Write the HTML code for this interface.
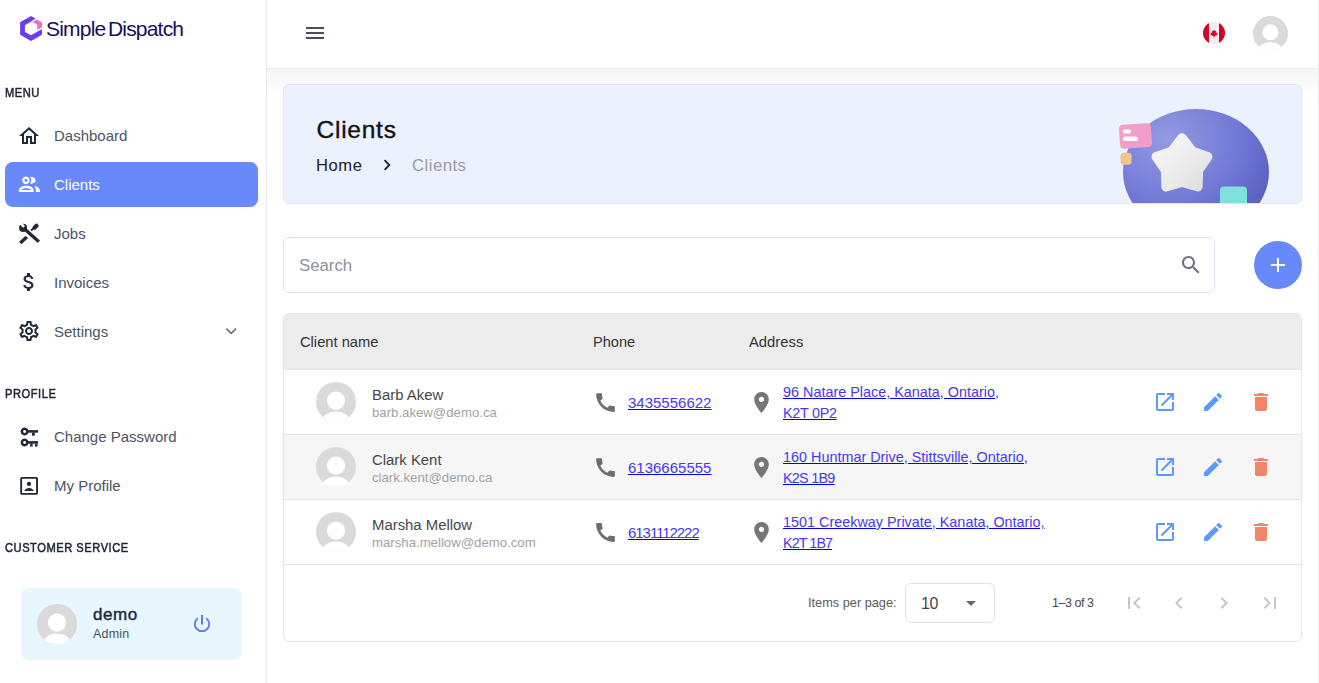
<!DOCTYPE html>
<html><head><meta charset="utf-8">
<style>
*{box-sizing:border-box;margin:0;padding:0}
html,body{width:1319px;height:683px;overflow:hidden;background:#fff;font-family:"Liberation Sans",sans-serif}
.t{position:absolute;white-space:nowrap}
.i{position:absolute;display:block;overflow:visible}
.b{position:absolute}
a,.u{text-decoration:underline;text-decoration-color:#0000ee;text-underline-offset:2px}
</style></head><body>

<div class="b" style="left:266px;top:0;width:1px;height:683px;background:#e8ebf0"></div>
<svg class="i" style="left:0;top:0;width:60px;height:60px" viewBox="0 0 60 60"><path fill="#6a3cf2" d="M35.5 18.5 L31 16 L20.1 22.2 L20.1 34.8 L31 40.9 L42 34.8 L42 29 L37.2 31.7 L31 35.3 L24.9 31.9 L24.9 25.3 L30.8 21.8 Z"/><path fill="#f06cc2" d="M32.4 22.2 L36.8 19.6 L42 22.5 L42 27.3 L37.2 29.9 L37.2 24.6 Z"/></svg>
<div class="t" style="left:46px;top:17px;font-size:21px;line-height:23px;color:#16105a;letter-spacing:-0.8px;word-spacing:-2.5px">Simple Dispatch</div>
<div class="t" style="left:5px;top:86px;font-size:12.5px;line-height:14px;color:#1f2636;letter-spacing:0.6px;-webkit-text-stroke:0.55px #1f2636;transform:scaleX(0.89);transform-origin:0 0">MENU</div>
<div class="t" style="left:5px;top:387px;font-size:12.5px;line-height:14px;color:#1f2636;letter-spacing:0.6px;-webkit-text-stroke:0.55px #1f2636;transform:scaleX(0.89);transform-origin:0 0">PROFILE</div>
<div class="t" style="left:5px;top:541px;font-size:12.5px;line-height:14px;color:#1f2636;letter-spacing:0.6px;-webkit-text-stroke:0.55px #1f2636;transform:scaleX(0.89);transform-origin:0 0">CUSTOMER SERVICE</div>
<div class="b" style="left:5px;top:162px;width:253px;height:45px;border-radius:8px;background:#6789fa"></div>
<svg class="i" style="left:17px;top:124px;width:24px;height:24px;fill:#222a3a" viewBox="0 0 24 24"><path d="M12 5.69l5 4.5V18h-2v-6H9v6H7v-7.81l5-4.5M12 3L2 12h3v8h6v-6h2v6h6v-8h3L12 3z"/></svg>
<div class="t" style="left:54px;top:127px;font-size:15px;line-height:17px;color:#4b5364">Dashboard</div>
<svg class="i" style="left:17px;top:172px;width:24px;height:24px" viewBox="0 0 24 24" fill="#fff"><path fill-rule="evenodd" d="M9 4.55 A3.75 3.75 0 1 1 8.99 4.55 Z M9 6.8 A1.5 1.5 0 1 0 9.01 6.8 Z"/><path d="M13.1 4.7 C16.8 4.7 18.6 6.4 18.6 8.35 C18.6 10.3 16.8 12 13.1 12 C13.9 10.9 14.2 9.7 14.2 8.35 C14.2 7 13.9 5.8 13.1 4.7 Z"/><path fill-rule="evenodd" d="M1.9 20 V18.6 C1.9 15.6 5.5 13.8 9.3 13.8 C13.1 13.8 16.7 15.6 16.7 18.6 V20 Z M4.2 18 C5 16.8 7 16.2 9.3 16.2 C11.6 16.2 13.6 16.8 14.4 18 Z"/><path d="M17.3 14.0 C20.6 14.5 22.9 16.1 22.9 18.6 V20 H18.9 V18.6 C18.9 16.8 18.3 15.2 17.3 14.0 Z"/></svg>
<div class="t" style="left:54px;top:176px;font-size:15px;line-height:17px;color:#fff">Clients</div>
<svg class="i" style="left:17px;top:221px;width:24px;height:24px" viewBox="0 0 24 24" fill="#222a3a"><defs><mask id="wm"><rect width="24" height="24" fill="#fff"/><path d="M4.3 1.2 L8.0 4.9 L6.1 6.8 L2.4 3.1 Z" fill="#000"/></mask></defs><g mask="url(#wm)"><circle cx="6.1" cy="6.9" r="4.05"/></g><path d="M8.2 8.4 L21.9 20.7" stroke="#222a3a" stroke-width="3.3"/><path d="M9.9 15.9 L3.2 21.9" stroke="#222a3a" stroke-width="3.4"/><path d="M14.0 9.5 L16.8 7.2" stroke="#222a3a" stroke-width="2.1"/><path d="M17.7 6.6 L19.5 4.8" stroke="#222a3a" stroke-width="4.3" stroke-linecap="round"/></svg>
<div class="t" style="left:54px;top:225px;font-size:15px;line-height:17px;color:#4b5364">Jobs</div>
<svg class="i" style="left:17px;top:270px;width:24px;height:24px;fill:#222a3a" viewBox="0 0 24 24"><path d="M11.8 10.9c-2.27-.59-3-1.2-3-2.15 0-1.09 1.01-1.85 2.7-1.85 1.78 0 2.44.85 2.5 2.1h2.21c-.07-1.72-1.12-3.3-3.21-3.81V3h-3v2.16c-1.94.42-3.5 1.68-3.5 3.61 0 2.31 1.91 3.46 4.7 4.13 2.5.6 3 1.48 3 2.41 0 .69-.49 1.79-2.7 1.79-2.06 0-2.87-.92-2.98-2.1h-2.2c.12 2.19 1.76 3.42 3.68 3.83V21h3v-2.15c1.95-.37 3.5-1.5 3.5-3.55 0-2.84-2.43-3.81-4.7-4.4z"/></svg>
<div class="t" style="left:54px;top:274px;font-size:15px;line-height:17px;color:#4b5364">Invoices</div>
<svg class="i" style="left:17px;top:319px;width:24px;height:24px;fill:#222a3a" viewBox="0 0 24 24"><path d="M19.43 12.98c.04-.32.07-.64.07-.98 0-.34-.03-.66-.07-.98l2.11-1.65c.19-.15.24-.42.12-.64l-2-3.46c-.09-.16-.26-.25-.44-.25-.06 0-.12.01-.17.03l-2.49 1c-.52-.4-1.08-.73-1.69-.98l-.38-2.65C14.46 2.18 14.25 2 14 2h-4c-.25 0-.46.18-.49.42l-.38 2.65c-.61.25-1.17.59-1.69.98l-2.49-1c-.06-.02-.12-.03-.18-.03-.17 0-.34.09-.43.25l-2 3.46c-.13.22-.07.49.12.64l2.11 1.65c-.04.32-.07.65-.07.98 0 .33.03.66.07.98l-2.11 1.65c-.19.15-.24.42-.12.64l2 3.46c.09.16.26.25.44.25.06 0 .12-.01.17-.03l2.49-1c.52.4 1.08.73 1.69.98l.38 2.65c.03.24.24.42.49.42h4c.25 0 .46-.18.49-.42l.38-2.65c.61-.25 1.17-.59 1.69-.98l2.49 1c.06.02.12.03.18.03.17 0 .34-.09.43-.25l2-3.46c.12-.22.07-.49-.12-.64l-2.11-1.65zm-1.98-1.71c.04.31.05.52.05.73 0 .21-.02.43-.05.73l-.14 1.13.89.7 1.08.84-.7 1.21-1.27-.51-1.04-.42-.9.68c-.43.32-.84.56-1.25.73l-1.06.43-.16 1.13-.2 1.35h-1.4l-.19-1.35-.16-1.13-1.06-.43c-.43-.18-.83-.41-1.23-.71l-.91-.7-1.06.43-1.27.51-.7-1.21 1.08-.84.89-.7-.14-1.13c-.03-.31-.05-.54-.05-.74s.02-.43.05-.73l.14-1.13-.89-.7-1.08-.84.7-1.21 1.27.51 1.04.42.9-.68c.43-.32.84-.56 1.25-.73l1.06-.43.16-1.13.2-1.35h1.39l.19 1.35.16 1.13 1.06.43c.43.18.83.41 1.23.71l.91.7 1.06-.43 1.27-.51.7 1.21-1.07.85-.89.7.14 1.13zM12 8c-2.21 0-4 1.79-4 4s1.79 4 4 4 4-1.79 4-4-1.79-4-4-4zm0 6c-1.1 0-2-.9-2-2s.9-2 2-2 2 .9 2 2-.9 2-2 2z"/></svg>
<div class="t" style="left:54px;top:323px;font-size:15px;line-height:17px;color:#4b5364">Settings</div>
<svg class="i" style="left:17px;top:424px;width:24px;height:24px" viewBox="0 0 24 24" fill="#222a3a"><path fill-rule="evenodd" d="M7.6 3.4 A4 4 0 1 1 7.59 3.4 Z M7.6 5.9 A1.5 1.5 0 1 0 7.61 5.9 Z"/><rect x="10.8" y="6.1" width="10.3" height="2.6"/><rect x="15" y="8.5" width="2.8" height="3.2"/><path fill-rule="evenodd" d="M7.6 14.4 A4 4 0 1 1 7.59 14.4 Z M7.6 16.9 A1.5 1.5 0 1 0 7.61 16.9 Z"/><rect x="10.8" y="17.1" width="10.3" height="2.6"/><rect x="13.1" y="19.5" width="2.5" height="3.1"/><rect x="18.1" y="19.5" width="2.4" height="3.1"/></svg>
<div class="t" style="left:54px;top:428px;font-size:15px;line-height:17px;color:#4b5364">Change Password</div>
<svg class="i" style="left:17px;top:473px;width:24px;height:24px" viewBox="0 0 24 24" fill="#222a3a"><path fill-rule="evenodd" d="M4.8 3.9h14.6a1.6 1.6 0 0 1 1.6 1.6v14.7a1.6 1.6 0 0 1 -1.6 1.6H4.8a1.6 1.6 0 0 1 -1.6 -1.6V5.5A1.6 1.6 0 0 1 4.8 3.9Z M5.1 5.8V19.9H19.1V5.8Z"/><circle cx="12" cy="10.9" r="2.15"/><path d="M7.2 17.9 C7.9 15.9 10 14.9 12 14.9 C14 14.9 16.1 15.9 16.8 17.9 Z"/></svg>
<div class="t" style="left:54px;top:477px;font-size:15px;line-height:17px;color:#4b5364">My Profile</div>
<svg class="i" style="left:224px;top:325px;width:14px;height:12px" viewBox="0 0 14 12"><path d="M2.3 3.6 L7.2 8.4 L12.1 3.6" fill="none" stroke="#667085" stroke-width="1.6"/></svg>
<div class="b" style="left:21px;top:588px;width:221px;height:72px;border-radius:8px;background:#e8f6fe"></div>
<svg class="i" style="left:37px;top:604px;width:40px;height:40px" viewBox="0 0 100 100"><defs><clipPath id="c37_604"><circle cx="50" cy="50" r="50"/></clipPath></defs><circle cx="50" cy="50" r="50" fill="#dadada"/><g clip-path="url(#c37_604)"><circle cx="50" cy="46.5" r="22.8" fill="#fff"/><ellipse cx="50" cy="100" rx="36" ry="26" fill="#fff"/></g></svg>
<div class="t" style="left:93px;top:605px;font-size:17px;line-height:19px;color:#232a3a;letter-spacing:0.55px;-webkit-text-stroke:0.45px #232a3a">demo</div>
<div class="t" style="left:93px;top:627px;font-size:12.5px;line-height:14px;color:#4a5262;letter-spacing:0.2px">Admin</div>
<svg class="i" style="left:0;top:0;width:1319px;height:683px" viewBox="0 0 1319 683"><path d="M197.77 618.17 A7.2 7.2 0 1 0 206.23 618.17" fill="none" stroke="#6079f3" stroke-width="1.8"/><path d="M202 615 V624.6" stroke="#6079f3" stroke-width="2"/></svg>
<div class="b" style="left:267px;top:68px;width:1052px;height:1px;background:#eaebee"></div>
<div class="b" style="left:267px;top:69px;width:1052px;height:30px;background:linear-gradient(#f5f6f7,#f9f9fa 40%,rgba(255,255,255,0))"></div>
<svg class="i" style="left:303px;top:21px;width:24px;height:24px;fill:#454d5e" viewBox="0 0 24 24"><path d="M3 18h18v-2H3v2zm0-5h18v-2H3v2zm0-7v2h18V6H3z"/></svg>
<svg class="i" style="left:1203px;top:22px;width:22px;height:22px" viewBox="0 0 22 22"><defs><clipPath id="fl"><circle cx="11" cy="11" r="11"/></clipPath></defs><g clip-path="url(#fl)"><rect width="22" height="22" fill="#eeeeee"/><rect width="6" height="22" fill="#d80027"/><rect x="16" width="6" height="22" fill="#d80027"/><path d="M11 7.5 L12 9.3 L13.2 8.8 L12.8 11 L14.5 10.6 L14 12 L15 12.5 L11.4 14.2 L11.4 15.6 L10.6 15.6 L10.6 14.2 L7 12.5 L8 12 L7.5 10.6 L9.2 11 L8.8 8.8 L10 9.3 Z" fill="#d80027"/></g></svg>
<svg class="i" style="left:1253px;top:16px;width:35px;height:35px" viewBox="0 0 100 100"><defs><clipPath id="c1253_16"><circle cx="50" cy="50" r="50"/></clipPath></defs><circle cx="50" cy="50" r="50" fill="#dadada"/><g clip-path="url(#c1253_16)"><circle cx="50" cy="46.5" r="22.8" fill="#fff"/><ellipse cx="50" cy="100" rx="36" ry="26" fill="#fff"/></g></svg>
<div class="b" style="left:1318px;top:0;width:1px;height:683px;background:#e8e9eb"></div>
<div class="b" style="left:283px;top:84px;width:1019px;height:120px;border:1px solid #e2e8f5;border-radius:6px;background:#ebf1fd;overflow:hidden">
<svg class="i" style="left:-1px;top:-1px;width:1019px;height:120px" viewBox="283 84 1019 120"><defs><radialGradient id="bg1" cx="0.3" cy="0.25" r="0.9"><stop offset="0" stop-color="#949be3"/><stop offset="0.55" stop-color="#7178d6"/><stop offset="1" stop-color="#5357b8"/></radialGradient><linearGradient id="st" x1="0" y1="0" x2="1" y2="1"><stop offset="0" stop-color="#f6f6f6"/><stop offset="0.6" stop-color="#ebebeb"/><stop offset="1" stop-color="#dcdcdf"/></linearGradient></defs><ellipse cx="1196" cy="172" rx="73" ry="63" fill="url(#bg1)"/><rect x="1119.5" y="124" width="32" height="24" rx="4" fill="#f0a0c8" transform="rotate(-4 1135 136)"/><rect x="1123" y="129.5" width="8" height="4" rx="2" fill="#fff"/><rect x="1123" y="136.5" width="15" height="4.6" rx="2.2" fill="#fff"/><rect x="1120.5" y="152.8" width="11" height="12" rx="3" fill="#f2c48c"/><path d="M1182.0 138.0 L1192.1 151.1 L1207.7 156.7 L1198.4 170.3 L1197.9 186.8 L1182.0 182.2 L1166.1 186.8 L1165.6 170.3 L1156.3 156.7 L1171.9 151.1 Z" fill="url(#st)" stroke="url(#st)" stroke-width="9.5" stroke-linejoin="round"/><rect x="1220" y="186.6" width="27" height="30" rx="4" fill="#7fe0dc"/></svg>
</div>
<div class="t" style="left:316.5px;top:116px;font-size:24.5px;line-height:27px;color:#141414;letter-spacing:0.75px;-webkit-text-stroke:0.4px #141414">Clients</div>
<div class="t" style="left:316px;top:156px;font-size:16.6px;line-height:19px;color:#222;letter-spacing:0.55px">Home</div>
<svg class="i" style="left:377px;top:153px;width:20px;height:24px" viewBox="0 0 20 24"><path d="M7.6 7.2 L12.3 12 L7.6 16.8" fill="none" stroke="#222" stroke-width="1.9"/></svg>
<div class="t" style="left:412px;top:156px;font-size:16.8px;line-height:19px;color:#9a9ca3;letter-spacing:0.45px">Clients</div>
<div class="b" style="left:283px;top:237px;width:932px;height:56px;border:1px solid #dfe3ef;border-radius:6px;background:#fff"></div>
<div class="t" style="left:299px;top:256px;font-size:16.8px;line-height:19px;color:#8d929b">Search</div>
<svg class="i" style="left:1179px;top:253px;width:24px;height:24px;fill:#6c717b" viewBox="0 0 24 24"><path d="M15.5 14h-.79l-.28-.27C15.41 12.59 16 11.11 16 9.5 16 5.91 13.09 3 9.5 3S3 5.91 3 9.5 5.91 16 9.5 16c1.61 0 3.09-.59 4.23-1.57l.27.28v.79l5 4.99L20.49 19l-4.99-5zm-6 0C7.01 14 5 11.99 5 9.5S7.01 5 9.5 5 14 7.01 14 9.5 11.99 14 9.5 14z"/></svg>
<div class="b" style="left:1254px;top:241px;width:48px;height:48px;border-radius:50%;background:#6789fa"></div>
<svg class="i" style="left:1266px;top:253px;width:24px;height:24px;fill:#fff" viewBox="0 0 24 24"><path d="M19 13h-6v6h-2v-6H5v-2h6V5h2v6h6v2z"/></svg>
<div class="b" style="left:283px;top:313px;width:1019px;height:329px;border:1px solid #e1e6ed;border-radius:6px;background:#fff;overflow:hidden">
<div class="b" style="left:0;top:0;width:1017px;height:55px;background:#ececec"></div>
<div class="b" style="left:0;top:55px;width:1017px;height:1px;background:#e1e6ec"></div>
<div class="b" style="left:0;top:121px;width:1017px;height:65px;background:#f6f6f6"></div>
<div class="b" style="left:0;top:120px;width:1017px;height:1px;background:#e1e6ec"></div>
<div class="b" style="left:0;top:185px;width:1017px;height:1px;background:#e1e6ec"></div>
<div class="b" style="left:0;top:250px;width:1017px;height:1px;background:#e1e6ec"></div>
</div>
<div class="t" style="left:300px;top:334px;font-size:14.7px;line-height:16px;color:#333">Client name</div>
<div class="t" style="left:593px;top:334px;font-size:14.6px;line-height:16px;color:#333">Phone</div>
<div class="t" style="left:749px;top:334px;font-size:14.8px;line-height:16px;color:#333">Address</div>
<svg class="i" style="left:316px;top:382px;width:40px;height:40px" viewBox="0 0 100 100"><defs><clipPath id="c316_382"><circle cx="50" cy="50" r="50"/></clipPath></defs><circle cx="50" cy="50" r="50" fill="#dadada"/><g clip-path="url(#c316_382)"><circle cx="50" cy="46.5" r="22.8" fill="#fff"/><ellipse cx="50" cy="100" rx="36" ry="26" fill="#fff"/></g></svg>
<div class="t" style="left:372px;top:387px;font-size:14.9px;line-height:16px;color:#474747">Barb Akew</div>
<div class="t" style="left:372px;top:405px;font-size:13.2px;line-height:15px;color:#a2a2a2">barb.akew@demo.ca</div>
<svg class="i" style="left:593px;top:390px;width:25px;height:25px;fill:#6e6e6e" viewBox="0 0 24 24"><path d="M20.01 15.38c-1.23 0-2.42-.2-3.53-.56-.35-.12-.74-.03-1.01.24l-1.57 1.97c-2.83-1.35-5.48-3.9-6.89-6.83l1.95-1.66c.27-.28.35-.67.24-1.02-.37-1.11-.56-2.3-.56-3.53 0-.54-.45-.99-.99-.99H4.19C3.65 3 3 3.24 3 3.99 3 13.28 10.73 21 20.01 21c.71 0 .99-.63.99-1.18v-3.45c0-.54-.45-.99-.99-.99z"/></svg>
<div class="t" style="left:628px;top:394px;font-size:15px;line-height:17px;color:#4538f0;text-decoration:underline;text-decoration-color:#0000ee;text-underline-offset:1px">3435556622</div>
<svg class="i" style="left:748.6px;top:389.6px;width:25px;height:25px;fill:#767676" viewBox="0 0 24 24"><path d="M12 2C8.13 2 5 5.13 5 9c0 5.25 7 13 7 13s7-7.75 7-13c0-3.87-3.13-7-7-7zm0 9.5c-1.38 0-2.5-1.12-2.5-2.5s1.12-2.5 2.5-2.5 2.5 1.12 2.5 2.5-1.12 2.5-2.5 2.5z"/></svg>
<div class="t" style="left:783px;top:384px;font-size:14.4px;line-height:16px;color:#4538f0;text-decoration:underline;text-decoration-color:#0000ee;text-underline-offset:1px">96 Natare Place, Kanata, Ontario,</div>
<div class="t" style="left:783px;top:405px;font-size:14.4px;line-height:16px;color:#4538f0;letter-spacing:-0.3px;text-decoration:underline;text-decoration-color:#0000ee;text-underline-offset:1px">K2T 0P2</div>
<svg class="i" style="left:1153px;top:390px;width:24px;height:24px;fill:#5b9bf8" viewBox="0 0 24 24"><path d="M19 19H5V5h7V3H5c-1.11 0-2 .9-2 2v14c0 1.1.89 2 2 2h14c1.1 0 2-.9 2-2v-7h-2v7zM14 3v2h3.59l-9.83 9.83 1.41 1.41L19 6.41V10h2V3h-7z"/></svg>
<svg class="i" style="left:1201px;top:390px;width:24px;height:24px;fill:#5b9bf8" viewBox="0 0 24 24"><path d="M3 17.25V21h3.75L17.81 9.94l-3.75-3.75L3 17.25zM20.71 7.04c.39-.39.39-1.02 0-1.41l-2.34-2.34a.9959.9959 0 0 0-1.41 0l-1.83 1.83 3.75 3.75 1.83-1.83z"/></svg>
<svg class="i" style="left:1249px;top:390px;width:24px;height:24px;fill:#f3846a" viewBox="0 0 24 24"><path d="M6 19c0 1.1.9 2 2 2h8c1.1 0 2-.9 2-2V7H6v12zM19 4h-3.5l-1-1h-5l-1 1H5v2h14V4z"/></svg>
<svg class="i" style="left:316px;top:447px;width:40px;height:40px" viewBox="0 0 100 100"><defs><clipPath id="c316_447"><circle cx="50" cy="50" r="50"/></clipPath></defs><circle cx="50" cy="50" r="50" fill="#dadada"/><g clip-path="url(#c316_447)"><circle cx="50" cy="46.5" r="22.8" fill="#fff"/><ellipse cx="50" cy="100" rx="36" ry="26" fill="#fff"/></g></svg>
<div class="t" style="left:372px;top:452px;font-size:14.9px;line-height:16px;color:#474747">Clark Kent</div>
<div class="t" style="left:372px;top:470px;font-size:13.2px;line-height:15px;color:#a2a2a2">clark.kent@demo.ca</div>
<svg class="i" style="left:593px;top:455px;width:25px;height:25px;fill:#6e6e6e" viewBox="0 0 24 24"><path d="M20.01 15.38c-1.23 0-2.42-.2-3.53-.56-.35-.12-.74-.03-1.01.24l-1.57 1.97c-2.83-1.35-5.48-3.9-6.89-6.83l1.95-1.66c.27-.28.35-.67.24-1.02-.37-1.11-.56-2.3-.56-3.53 0-.54-.45-.99-.99-.99H4.19C3.65 3 3 3.24 3 3.99 3 13.28 10.73 21 20.01 21c.71 0 .99-.63.99-1.18v-3.45c0-.54-.45-.99-.99-.99z"/></svg>
<div class="t" style="left:628px;top:459px;font-size:15px;line-height:17px;color:#4538f0;text-decoration:underline;text-decoration-color:#0000ee;text-underline-offset:1px">6136665555</div>
<svg class="i" style="left:748.6px;top:454.6px;width:25px;height:25px;fill:#767676" viewBox="0 0 24 24"><path d="M12 2C8.13 2 5 5.13 5 9c0 5.25 7 13 7 13s7-7.75 7-13c0-3.87-3.13-7-7-7zm0 9.5c-1.38 0-2.5-1.12-2.5-2.5s1.12-2.5 2.5-2.5 2.5 1.12 2.5 2.5-1.12 2.5-2.5 2.5z"/></svg>
<div class="t" style="left:783px;top:449px;font-size:14.4px;line-height:16px;color:#4538f0;text-decoration:underline;text-decoration-color:#0000ee;text-underline-offset:1px">160 Huntmar Drive, Stittsville, Ontario,</div>
<div class="t" style="left:783px;top:470px;font-size:14.4px;line-height:16px;color:#4538f0;letter-spacing:-0.75px;text-decoration:underline;text-decoration-color:#0000ee;text-underline-offset:1px">K2S 1B9</div>
<svg class="i" style="left:1153px;top:455px;width:24px;height:24px;fill:#5b9bf8" viewBox="0 0 24 24"><path d="M19 19H5V5h7V3H5c-1.11 0-2 .9-2 2v14c0 1.1.89 2 2 2h14c1.1 0 2-.9 2-2v-7h-2v7zM14 3v2h3.59l-9.83 9.83 1.41 1.41L19 6.41V10h2V3h-7z"/></svg>
<svg class="i" style="left:1201px;top:455px;width:24px;height:24px;fill:#5b9bf8" viewBox="0 0 24 24"><path d="M3 17.25V21h3.75L17.81 9.94l-3.75-3.75L3 17.25zM20.71 7.04c.39-.39.39-1.02 0-1.41l-2.34-2.34a.9959.9959 0 0 0-1.41 0l-1.83 1.83 3.75 3.75 1.83-1.83z"/></svg>
<svg class="i" style="left:1249px;top:455px;width:24px;height:24px;fill:#f3846a" viewBox="0 0 24 24"><path d="M6 19c0 1.1.9 2 2 2h8c1.1 0 2-.9 2-2V7H6v12zM19 4h-3.5l-1-1h-5l-1 1H5v2h14V4z"/></svg>
<svg class="i" style="left:316px;top:512px;width:40px;height:40px" viewBox="0 0 100 100"><defs><clipPath id="c316_512"><circle cx="50" cy="50" r="50"/></clipPath></defs><circle cx="50" cy="50" r="50" fill="#dadada"/><g clip-path="url(#c316_512)"><circle cx="50" cy="46.5" r="22.8" fill="#fff"/><ellipse cx="50" cy="100" rx="36" ry="26" fill="#fff"/></g></svg>
<div class="t" style="left:372px;top:517px;font-size:14.9px;line-height:16px;color:#474747">Marsha Mellow</div>
<div class="t" style="left:372px;top:535px;font-size:13.2px;line-height:15px;color:#a2a2a2">marsha.mellow@demo.com</div>
<svg class="i" style="left:593px;top:520px;width:25px;height:25px;fill:#6e6e6e" viewBox="0 0 24 24"><path d="M20.01 15.38c-1.23 0-2.42-.2-3.53-.56-.35-.12-.74-.03-1.01.24l-1.57 1.97c-2.83-1.35-5.48-3.9-6.89-6.83l1.95-1.66c.27-.28.35-.67.24-1.02-.37-1.11-.56-2.3-.56-3.53 0-.54-.45-.99-.99-.99H4.19C3.65 3 3 3.24 3 3.99 3 13.28 10.73 21 20.01 21c.71 0 .99-.63.99-1.18v-3.45c0-.54-.45-.99-.99-.99z"/></svg>
<div class="t" style="left:628px;top:524px;font-size:15px;line-height:17px;color:#4538f0;letter-spacing:-1.05px;text-decoration:underline;text-decoration-color:#0000ee;text-underline-offset:1px">6131112222</div>
<svg class="i" style="left:748.6px;top:519.6px;width:25px;height:25px;fill:#767676" viewBox="0 0 24 24"><path d="M12 2C8.13 2 5 5.13 5 9c0 5.25 7 13 7 13s7-7.75 7-13c0-3.87-3.13-7-7-7zm0 9.5c-1.38 0-2.5-1.12-2.5-2.5s1.12-2.5 2.5-2.5 2.5 1.12 2.5 2.5-1.12 2.5-2.5 2.5z"/></svg>
<div class="t" style="left:783px;top:514px;font-size:14.4px;line-height:16px;color:#4538f0;text-decoration:underline;text-decoration-color:#0000ee;text-underline-offset:1px">1501 Creekway Private, Kanata, Ontario,</div>
<div class="t" style="left:783px;top:535px;font-size:14.4px;line-height:16px;color:#4538f0;letter-spacing:-0.95px;text-decoration:underline;text-decoration-color:#0000ee;text-underline-offset:1px">K2T 1B7</div>
<svg class="i" style="left:1153px;top:520px;width:24px;height:24px;fill:#5b9bf8" viewBox="0 0 24 24"><path d="M19 19H5V5h7V3H5c-1.11 0-2 .9-2 2v14c0 1.1.89 2 2 2h14c1.1 0 2-.9 2-2v-7h-2v7zM14 3v2h3.59l-9.83 9.83 1.41 1.41L19 6.41V10h2V3h-7z"/></svg>
<svg class="i" style="left:1201px;top:520px;width:24px;height:24px;fill:#5b9bf8" viewBox="0 0 24 24"><path d="M3 17.25V21h3.75L17.81 9.94l-3.75-3.75L3 17.25zM20.71 7.04c.39-.39.39-1.02 0-1.41l-2.34-2.34a.9959.9959 0 0 0-1.41 0l-1.83 1.83 3.75 3.75 1.83-1.83z"/></svg>
<svg class="i" style="left:1249px;top:520px;width:24px;height:24px;fill:#f3846a" viewBox="0 0 24 24"><path d="M6 19c0 1.1.9 2 2 2h8c1.1 0 2-.9 2-2V7H6v12zM19 4h-3.5l-1-1h-5l-1 1H5v2h14V4z"/></svg>
<div class="t" style="left:808px;top:595px;font-size:12.75px;line-height:15px;color:#5c5c5c">Items per page:</div>
<div class="b" style="left:905px;top:583px;width:90px;height:40px;border:1px solid #dde2ee;border-radius:6px"></div>
<div class="t" style="left:921px;top:595px;font-size:16px;line-height:17px;color:#474747;letter-spacing:-0.3px">10</div>
<svg class="i" style="left:959px;top:591px;width:24px;height:24px;fill:#666" viewBox="0 0 24 24"><path d="M7 10l5 5 5-5z"/></svg>
<div class="t" style="left:1052px;top:596px;font-size:12.5px;line-height:14px;color:#474747;letter-spacing:-0.45px">1&ndash;3 of 3</div>
<svg class="i" style="left:1122px;top:591px;width:24px;height:24px;fill:#c6c6c6" viewBox="0 0 24 24"><path d="M18.41 16.59L13.82 12l4.59-4.59L17 6l-6 6 6 6zM6 6h2v12H6z"/></svg>
<svg class="i" style="left:1167px;top:591px;width:24px;height:24px;fill:#c6c6c6" viewBox="0 0 24 24"><path d="M15.41 7.41L14 6l-6 6 6 6 1.41-1.41L10.83 12z"/></svg>
<svg class="i" style="left:1212px;top:591px;width:24px;height:24px;fill:#c6c6c6" viewBox="0 0 24 24"><path d="M10 6L8.59 7.41 13.17 12l-4.58 4.59L10 18l6-6z"/></svg>
<svg class="i" style="left:1258px;top:591px;width:24px;height:24px;fill:#c6c6c6" viewBox="0 0 24 24"><path d="M5.59 7.41L10.18 12l-4.59 4.59L7 18l6-6-6-6zM16 6h2v12h-2z"/></svg>
</body></html>
